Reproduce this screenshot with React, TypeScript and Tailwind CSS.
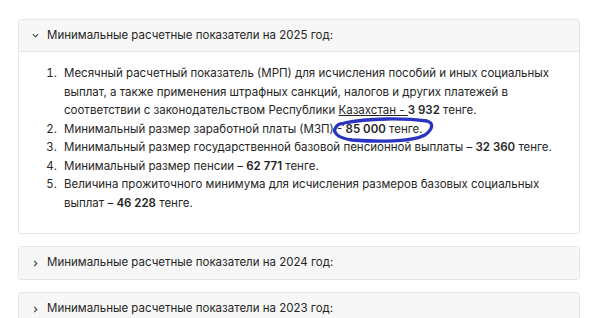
import React from "react";

const Chevron = ({ open }: { open: boolean }) => (
  <svg width="9" height="9" viewBox="0 0 10 10" className="shrink-0" fill="none" stroke="#444" strokeWidth="1.2">
    {open ? <path d="M2 3.5 L5 6.5 L8 3.5" /> : <path d="M3.5 2 L6.5 5 L3.5 8" />}
  </svg>
);

const Header = ({ year, open }: { year: string; open: boolean }) => (
  <div className={`flex items-center h-[32px] pl-[12px] gap-[7px] bg-[#f7f7f7] ${open ? "border-b border-[#e6e6e6]" : ""}`}>
    <Chevron open={open} />
    <span className="text-[11.5px] text-[#262626]">Минимальные расчетные показатели на {year} год:</span>
  </div>
);

export default function App() {
  return (
    <div className="relative w-[600px] h-[318px] bg-white overflow-hidden" style={{ fontFamily: "Inter, 'Noto Sans', sans-serif" }}>
      <div className="pt-[19px] pl-[18px] w-[580px] flex flex-col gap-[12px]">
        <div className="border border-[#e6e6e6] rounded-[3px] overflow-hidden">
          <Header year="2025" open />
          <div className="pt-[12px] pb-[21px] pl-[22px] pr-[20px] text-[11.5px] leading-[18.5px] text-[#262626]">
            <ol className="list-decimal pl-[19px] marker:text-[#262626]">
              <li className="pl-[4px]">
                Месячный расчетный показатель (МРП) для исчисления пособий и иных социальных выплат, а также применения штрафных санкций, налогов и других платежей в соответствии с законодательством Республики <span className="underline">Казахстан - </span><b className="font-semibold">3 932</b> тенге.
              </li>
              <li className="pl-[4px]">
                Минимальный размер заработной платы (МЗП) - <b className="font-semibold">85 000</b> тенге.
              </li>
              <li className="pl-[4px]">
                Минимальный размер государственной базовой пенсионной выплаты – <b className="font-semibold">32 360</b> тенге.
              </li>
              <li className="pl-[4px]">
                Минимальный размер пенсии – <b className="font-semibold">62 771</b> тенге.
              </li>
              <li className="pl-[4px]">
                Величина прожиточного минимума для исчисления размеров базовых социальных выплат – <b className="font-semibold">46 228</b> тенге.
              </li>
            </ol>
          </div>
        </div>
        <div className="border border-[#e6e6e6] rounded-[3px] overflow-hidden">
          <Header year="2024" open={false} />
        </div>
        <div className="border border-[#e6e6e6] rounded-[3px] overflow-hidden">
          <Header year="2023" open={false} />
        </div>
      </div>
      <svg className="absolute left-0 top-0 pointer-events-none" width="600" height="318" viewBox="0 0 600 318" fill="none">
        <path
          d="M344 123 C 368 118, 405 118, 427 121 C 434 123, 433 129, 425 135 C 412 142, 378 142, 352 140 C 337 138, 332 132, 336 127 C 338 124, 341 123, 343 124"
          stroke="#2a33c2"
          strokeWidth="3.3"
          strokeLinecap="round"
        />
      </svg>
    </div>
  );
}
